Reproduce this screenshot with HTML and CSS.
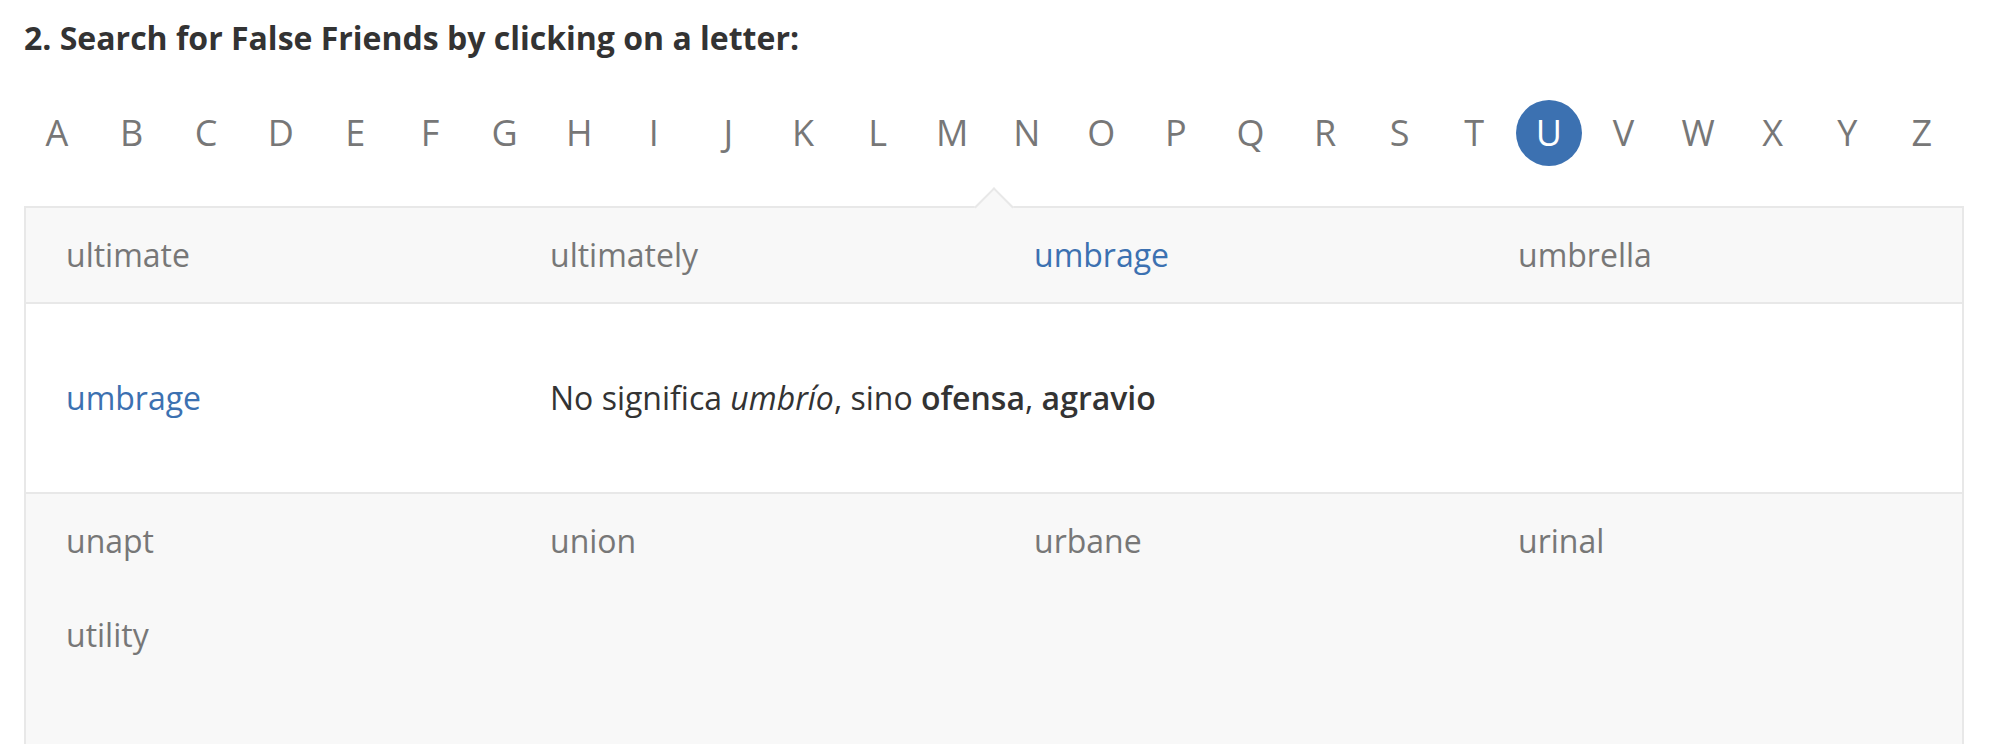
FILE: index.html
```html
<!DOCTYPE html>
<html lang="en">
<head>
<meta charset="utf-8">
<title>False Friends</title>
<link rel="stylesheet" href="styles.css">
</head>
<body>
<div class="page">
  <h2 class="title">2. Search for False Friends by clicking on a letter:</h2>
  <nav class="letters">
    <a class="letter">A</a><a class="letter">B</a><a class="letter">C</a><a class="letter">D</a><a class="letter">E</a><a class="letter">F</a><a class="letter">G</a><a class="letter">H</a><a class="letter">I</a><a class="letter">J</a><a class="letter">K</a><a class="letter">L</a><a class="letter">M</a><a class="letter">N</a><a class="letter">O</a><a class="letter">P</a><a class="letter">Q</a><a class="letter">R</a><a class="letter">S</a><a class="letter">T</a><a class="letter active">U</a><a class="letter">V</a><a class="letter">W</a><a class="letter">X</a><a class="letter">Y</a><a class="letter">Z</a>
  </nav>
  <div class="panel">
    <div class="row shaded">
      <a class="word">ultimate</a>
      <a class="word">ultimately</a>
      <a class="word selected">umbrage</a>
      <a class="word">umbrella</a>
    </div>
    <div class="row detail">
      <a class="word selected">umbrage</a>
      <p class="definition">No significa <i>umbrío</i>, sino <b>ofensa</b>, <b>agravio</b></p>
    </div>
    <div class="row shaded last">
      <a class="word">unapt</a>
      <a class="word">union</a>
      <a class="word">urbane</a>
      <a class="word">urinal</a>
      <a class="word">utility</a>
    </div>
  </div>
</div>
</body>
</html>
```
FILE: styles.css
```css
html, body {
  margin: 0;
  padding: 0;
  background: #fff;
  overflow: hidden;
}

.page {
  width: 1940px;
  padding: 18px 0 0 24px;
  font-family: "Open Sans", "Liberation Sans", sans-serif;
}

.title {
  margin: 0;
  font-size: 32px;
  line-height: 40px;
  font-weight: 700;
  color: #333;
}

.letters {
  display: flex;
  justify-content: space-between;
  margin-top: 42px;
  padding-right: 9px;
}

.letter {
  width: 66px;
  height: 66px;
  line-height: 66px;
  text-align: center;
  font-size: 36px;
  color: #777;
  border-radius: 50%;
}

.letter.active {
  background: #3c71b1;
  color: #fff;
}

.panel {
  position: relative;
  margin-top: 40px;
  border: 2px solid #e8e8e8;
  border-bottom: none;
}

.panel::before {
  content: "";
  position: absolute;
  top: -15px;
  left: calc(50% - 14px);
  width: 28px;
  height: 28px;
  box-sizing: border-box;
  background: #f8f8f8;
  border-top: 2px solid #e8e8e8;
  border-left: 2px solid #e8e8e8;
  transform: rotate(45deg);
}

.row {
  display: grid;
  grid-template-columns: repeat(4, 1fr);
  border-bottom: 2px solid #e8e8e8;
}

.shaded {
  background: #f8f8f8;
}

.row.last {
  border-bottom: none;
  padding-bottom: 120px;
}

.word {
  display: block;
  padding: 20px 0 20px 40px;
  font-size: 32px;
  line-height: 54px;
  color: #777;
}

.word.selected {
  color: #3c71b1;
}

.detail {
  background: #fff;
}

.detail .word {
  padding-top: 67px;
  padding-bottom: 67px;
}

.definition {
  grid-column: 2 / span 3;
  margin: 0;
  padding: 67px 0 67px 40px;
  font-size: 32px;
  line-height: 54px;
  color: #333;
}

.definition b {
  font-weight: 600;
}
```
